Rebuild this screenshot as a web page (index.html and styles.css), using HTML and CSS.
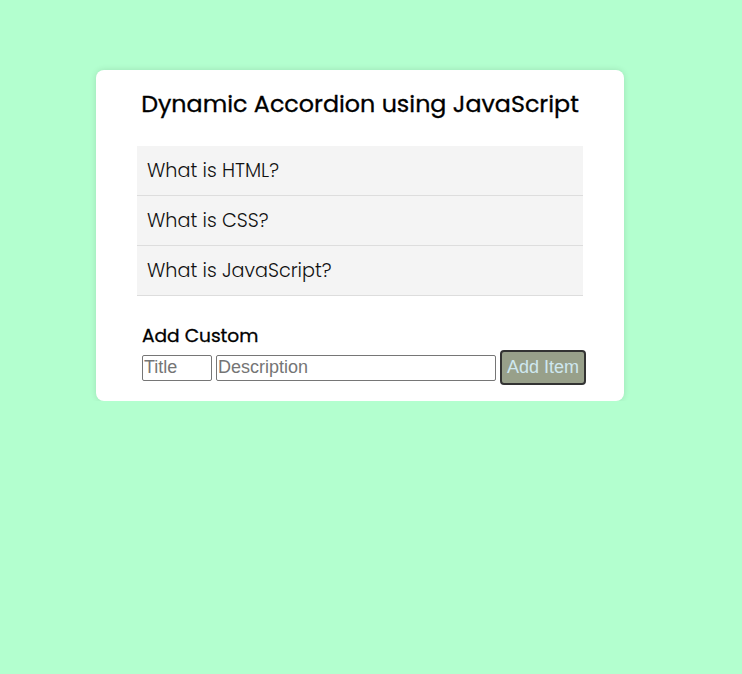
FILE: index.html
```html
<!DOCTYPE html>
<html>
<head>
<meta charset="utf-8">
<title>Dynamic Accordion</title>
<link rel="stylesheet" href="styles.css">
</head>
<body>
<div class="card">
  <h1 class="title">Dynamic Accordion using JavaScript</h1>
  <div class="accordion">
    <div class="item">What is HTML?</div>
    <div class="item">What is CSS?</div>
    <div class="item">What is JavaScript?</div>
  </div>
  <div class="add">
    <h2 class="add-title">Add Custom</h2>
    <div class="add-row">
      <input class="in in-title" type="text" placeholder="Title">
      <input class="in in-desc" type="text" placeholder="Description">
      <button class="btn">Add Item</button>
    </div>
  </div>
</div>
</body>
</html>
```
FILE: styles.css
```css
html, body {
  margin: 0;
  padding: 0;
  background: #b3ffcf;
  min-height: 100%;
}
body {
  font-family: "Poppins", "Inter", "Noto Sans", sans-serif;
  padding-top: 70px;
}
.card {
  box-sizing: border-box;
  width: 528px;
  margin-left: 96px;
  background: #fff;
  border-radius: 8px;
  box-shadow: 0 0 6px rgba(0, 0, 0, 0.12);
  padding: 18px 41px 16px;
}
.title {
  margin: 0 -20px 26px;
  text-align: center;
  white-space: nowrap;
  font-size: 23.8px;
  line-height: 32px;
  font-weight: 400;
  -webkit-text-stroke: 0.3px #000;
  color: #000;
}
.accordion {
  display: flex;
  flex-direction: column;
}
.item {
  height: 49px;
  border-bottom: 1px solid #dddddd;
  background: #f4f4f4;
  padding-left: 10px;
  display: flex;
  align-items: center;
  font-size: 19.2px;
  font-weight: 300;
  color: #111;
}
.add {
  margin: 26px 0 0 5px;
}
.add-title {
  margin: 0 0 1px;
  font-size: 18.6px;
  line-height: 27px;
  font-weight: 400;
  -webkit-text-stroke: 0.3px #000;
  color: #000;
}
.add-row {
  display: flex;
  align-items: center;
  gap: 4px;
}
.in {
  flex-shrink: 0;
  box-sizing: border-box;
  height: 26px;
  border: 1px solid #767676;
  border-radius: 2px;
  padding: 0 1px;
  font-family: "Liberation Sans", Arial, sans-serif;
  font-size: 18px;
  color: #000;
  background: #fff;
}
.in::placeholder {
  color: #757575;
}
.in-title { width: 70px; }
.in-desc { width: 280px; }
.btn {
  flex-shrink: 0;
  box-sizing: border-box;
  width: 86px;
  height: 35px;
  background: #98a08a;
  border: 2px solid #333;
  border-radius: 4px;
  color: #cfe8f0;
  font-family: "Liberation Sans", Arial, sans-serif;
  font-size: 18px;
  padding: 0;
}
```
